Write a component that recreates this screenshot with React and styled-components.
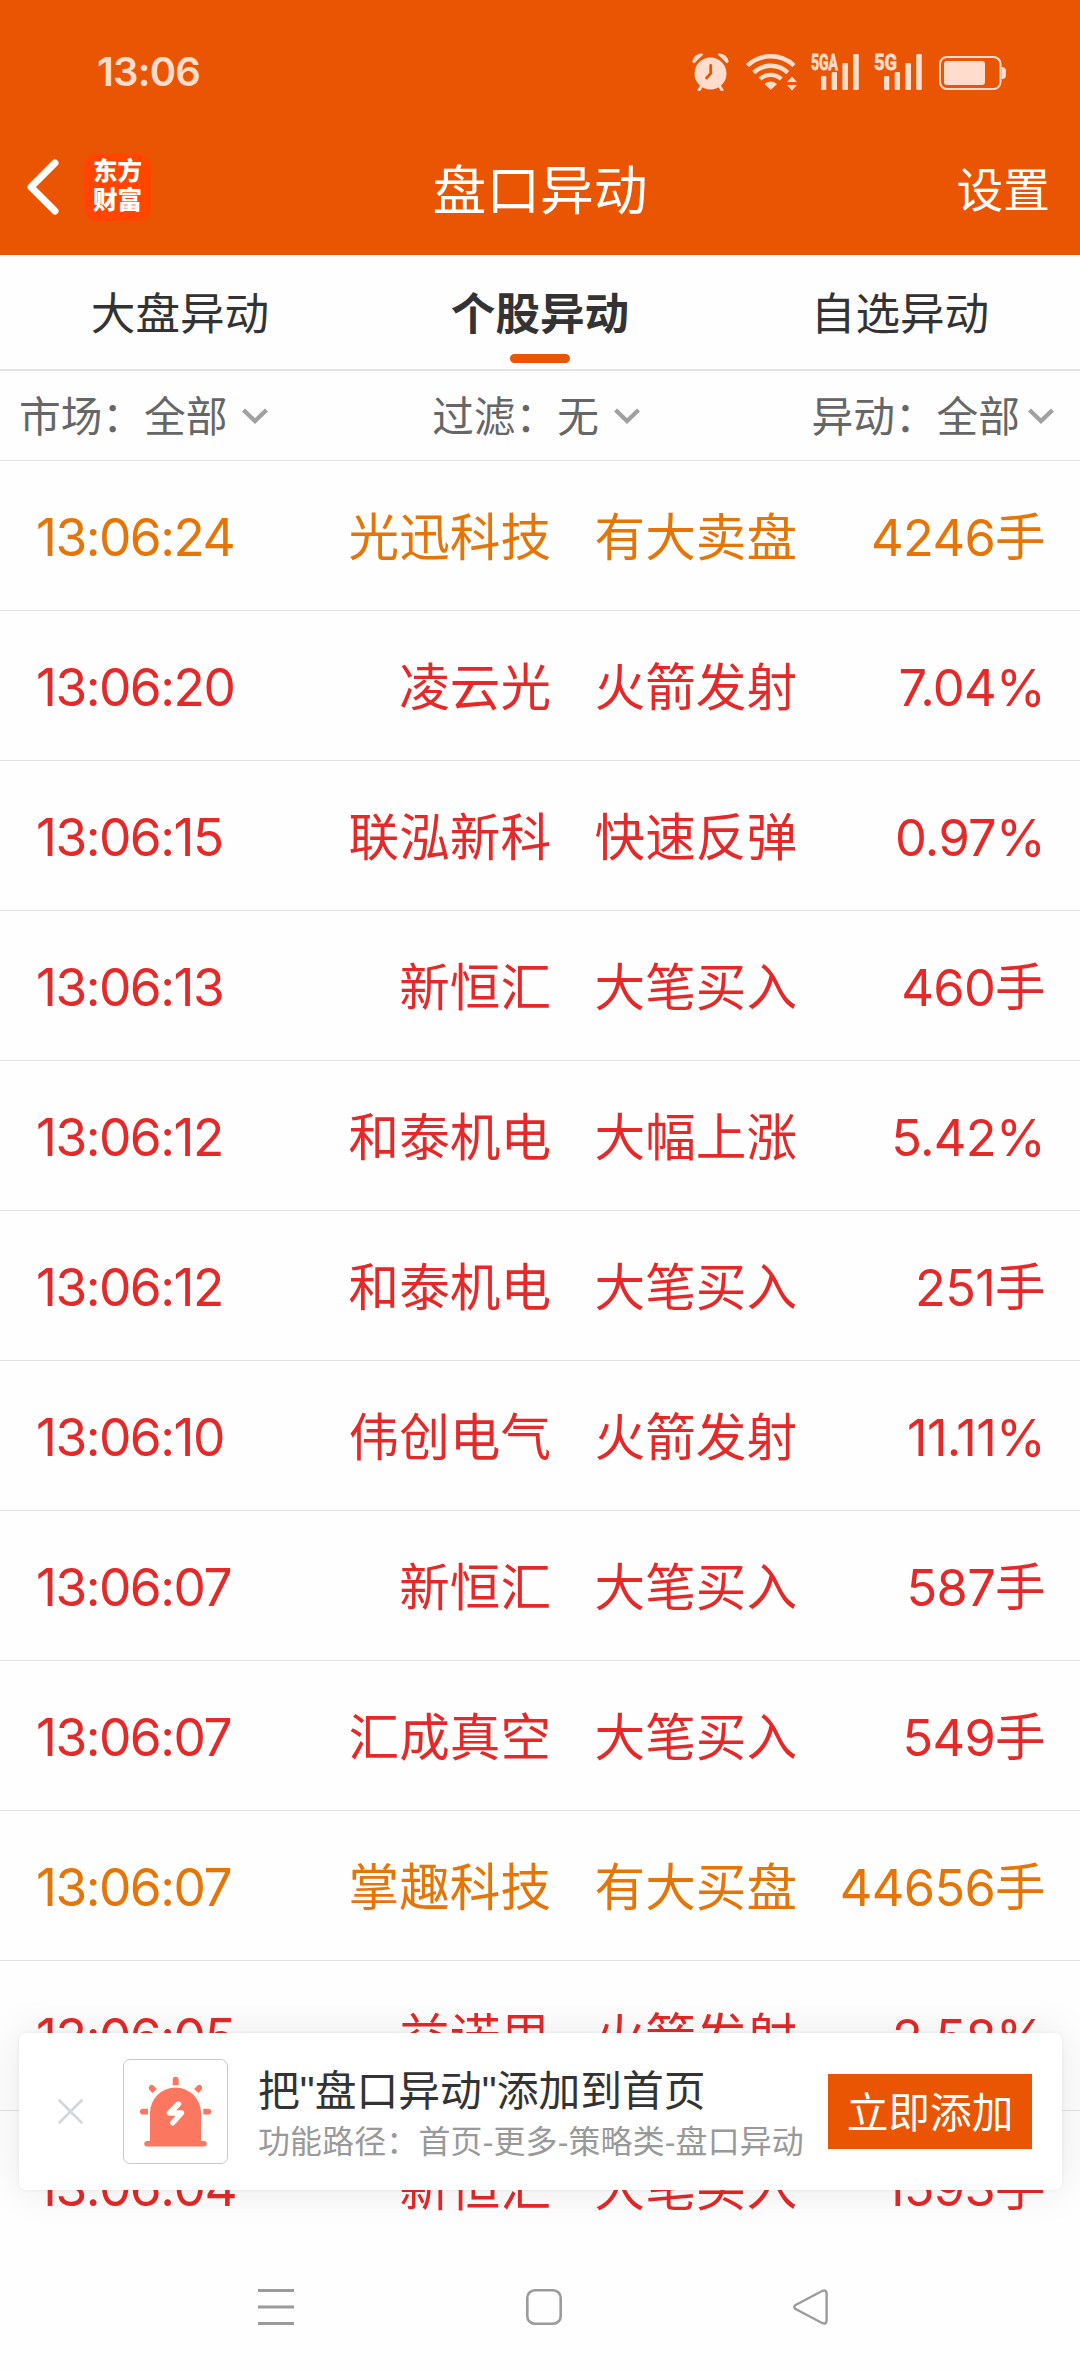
import React from 'react';
import styled, { createGlobalStyle } from 'styled-components';

const GlobalStyle = createGlobalStyle`
    * {
        box-sizing: border-box;
    }
    body {
        margin: 0;
        background-color: #ffffff;
        font-family: Inter, "Noto Sans CJK SC", sans-serif;
    }
`;

const Page = styled.div`
    display: flex;
    flex-direction: column;
    width: 1080px;
    height: 2373px;
    overflow: hidden;
    background-color: #fefefe;
`;

const Header = styled.header`
    height: 255px;
    background-color: #ea5504;
    color: #ffffff;
`;

const StatusBar = styled.div`
    display: flex;
    align-items: center;
    justify-content: space-between;
    height: 125px;
    padding: 18px 73px 0 97px;
    color: #ffdccb;
`;

const Clock = styled.span`
    font-size: 40px;
    font-weight: 600;
    letter-spacing: -0.8px;
`;

const StatusIcons = styled.div`
    display: flex;
    align-items: center;
    svg {
        display: block;
    }
`;

const TitleBar = styled.div`
    display: grid;
    grid-template-columns: 1fr auto 1fr;
    align-items: center;
    height: 124px;
    padding: 0 30px 0 26px;
`;

const TitleLeft = styled.div`
    display: flex;
    align-items: center;
    gap: 24px;
`;

const Logo = styled.div`
    width: 67px;
    height: 67px;
    padding-top: 3px;
    border-radius: 14px;
    background-color: #ff4500;
    font-size: 24.5px;
    font-weight: 900;
    line-height: 29px;
    text-align: center;
`;

const Title = styled.h1`
    margin: 0;
    padding: 7px 0 0 4px;
    font-size: 53.8px;
    font-weight: 400;
    line-height: 60px;
`;

const Settings = styled.span`
    justify-self: end;
    padding-top: 5px;
    font-size: 46.7px;
    line-height: 60px;
`;

const Tabs = styled.nav`
    display: grid;
    grid-template-columns: repeat(3, 1fr);
    height: 116px;
    border-bottom: 2px solid #e4e4e4;
`;

const Tab = styled.div`
    position: relative;
    display: flex;
    align-items: center;
    justify-content: center;
    padding-bottom: 3px;
    color: #333333;
    font-size: 44.6px;
    font-weight: ${props => (props.$active ? 700 : 400)};

    &::after {
        content: '';
        display: ${props => (props.$active ? 'block' : 'none')};
        position: absolute;
        bottom: 6px;
        width: 60px;
        height: 9px;
        border-radius: 5px;
        background-color: #ea5504;
    }
`;

const Filters = styled.div`
    display: flex;
    align-items: center;
    justify-content: space-between;
    height: 90px;
    padding: 0 26px 0 19px;
    border-bottom: 1px solid #e2e2e2;
`;

const Filter = styled.div`
    display: flex;
    align-items: center;
    gap: ${props => props.$gap || 15}px;
    margin-right: ${props => props.$shift || 0}px;
    color: #666666;
    font-size: 41.7px;
`;

const FilterLabel = styled.span`
    padding-bottom: 4px;
`;

const List = styled.div`
    flex: 1;
    min-height: 0;
    overflow: hidden;
`;

const Row = styled.div`
    display: grid;
    grid-template-columns: 300px 215px 246px 1fr;
    align-items: center;
    height: 150px;
    padding: 4px 36px 0;
    border-bottom: 1px solid #e2e2e2;
    color: ${props => (props.$amber ? '#e67508' : '#e52828')};
    font-size: 50.6px;
    line-height: 70px;
    white-space: nowrap;
`;

const Time = styled.span`
    padding-bottom: 2px;
    font-size: 51.4px;
    letter-spacing: -1.5px;
`;

const Name = styled.span`
    text-align: right;
`;

const Kind = styled.span`
    text-align: right;
`;

const Value = styled.span`
    margin-right: -1px;
    letter-spacing: -0.7px;
    text-align: right;
`;

const Popup = styled.aside`
    position: absolute;
    top: 2033px;
    left: 19px;
    display: flex;
    align-items: center;
    width: 1043px;
    height: 157px;
    padding: 0 30px 0 39px;
    border-radius: 7px;
    background-color: #ffffff;
    box-shadow: 0 0 42px rgba(0, 0, 0, 0.09), 0 0 4px rgba(0, 0, 0, 0.06);
    font-family: "Liberation Sans", "Noto Sans CJK SC", sans-serif;
`;

const AppIcon = styled.div`
    width: 105px;
    height: 105px;
    margin: 0 30px 0 40px;
    border: 1px solid #c9c9c9;
    border-radius: 7px;
    svg {
        display: block;
        margin: -1px;
    }
`;

const PopupText = styled.div`
    flex: 1;
    padding-top: 7px;
    white-space: nowrap;
`;

const PopupTitle = styled.div`
    color: #333333;
    font-size: 41.8px;
    line-height: 54px;
`;

const PopupPath = styled.div`
    color: #999999;
    font-size: 31.9px;
    letter-spacing: 0.2px;
    line-height: 46px;
`;

const AddButton = styled.button`
    width: 204px;
    height: 75px;
    padding: 4px 0 0;
    border: none;
    background-color: #ea5504;
    color: #ffffff;
    font-family: inherit;
    font-size: 41.7px;
    line-height: 71px;
`;

const NavBar = styled.footer`
    display: flex;
    justify-content: space-between;
    height: 133px;
    padding: 49px 252px 0 258px;
    svg {
        display: block;
    }
`;

const rows = [
    { time: '13:06:24', name: '光迅科技', kind: '有大卖盘', value: '4246手', amber: true },
    { time: '13:06:20', name: '凌云光', kind: '火箭发射', value: '7.04%' },
    { time: '13:06:15', name: '联泓新科', kind: '快速反弹', value: '0.97%' },
    { time: '13:06:13', name: '新恒汇', kind: '大笔买入', value: '460手' },
    { time: '13:06:12', name: '和泰机电', kind: '大幅上涨', value: '5.42%' },
    { time: '13:06:12', name: '和泰机电', kind: '大笔买入', value: '251手' },
    { time: '13:06:10', name: '伟创电气', kind: '火箭发射', value: '11.11%' },
    { time: '13:06:07', name: '新恒汇', kind: '大笔买入', value: '587手' },
    { time: '13:06:07', name: '汇成真空', kind: '大笔买入', value: '549手' },
    { time: '13:06:07', name: '掌趣科技', kind: '有大买盘', value: '44656手', amber: true },
    { time: '13:06:05', name: '益诺思', kind: '火箭发射', value: '2.58%' },
    { time: '13:06:04', name: '新恒汇', kind: '大笔买入', value: '1593手' },
];

const Chevron = () => (
    <svg width="26" height="16" viewBox="0 0 26 16" fill="none" stroke="#a0a0a0" strokeWidth="4.2">
        <path d="M1.5 2 L13 13 L24.5 2" />
    </svg>
);

const AlarmIcon = () => (
    <svg width="37" height="38" viewBox="0 0 37 38">
        <circle cx="18.5" cy="20.5" r="16" fill="currentColor" />
        <path d="M1 8.5 Q2.5 1.5 10.5 1.2 L2 9.5 Z M36 8.5 Q34.5 1.5 26.5 1.2 L35 9.5 Z" fill="currentColor" stroke="currentColor" strokeWidth="1.4" strokeLinejoin="round" />
        <path d="M9.5 33 L7 37 M27.5 33 L30 37" stroke="currentColor" strokeWidth="3" strokeLinecap="round" />
        <path d="M18.7 12.5 V20.5 L14.5 25" fill="none" stroke="#ea5504" strokeWidth="2.8" strokeLinecap="round" />
    </svg>
);

const WifiIcon = () => (
    <svg width="52" height="38" viewBox="0 0 52 38" fill="none" stroke="currentColor" strokeWidth="4.4">
        <path d="M1.5 12.5 A34 34 0 0 1 48 12.5" />
        <path d="M7.8 19.6 A24.5 24.5 0 0 1 41.7 19.6" />
        <path d="M14.2 26 A15.5 15.5 0 0 1 35.3 26" />
        <path d="M18.5 31 A9 9 0 0 1 31 31 L24.7 37 Z" fill="currentColor" stroke="none" />
        <path d="M41 29 L46 23.5 L51 29 Z M41 32 L46 37.5 L51 32 Z" fill="currentColor" stroke="none" />
    </svg>
);

const Signal = ({ label, labelWidth }) => (
    <svg width="48" height="58" viewBox="0 -10 48 58" fill="currentColor">
        <text x="0" y="16.5" fontFamily="Roboto" fontWeight="700" fontSize="22" stroke="currentColor" strokeWidth="0.8" textLength={labelWidth} lengthAdjust="spacingAndGlyphs">
            {label}
        </text>
        <rect x="10" y="23" width="5.3" height="14" rx="1" />
        <rect x="20.7" y="19" width="5.3" height="18" rx="1" />
        <rect x="31.4" y="10" width="5.6" height="27" rx="1" />
        <rect x="42.2" y="1" width="5.6" height="36" rx="1" />
    </svg>
);

const BatteryIcon = () => (
    <svg width="68" height="38" viewBox="0 0 68 38">
        <rect x="1" y="4" width="60.5" height="32" rx="7" fill="none" stroke="currentColor" strokeWidth="2" />
        <rect x="5" y="8" width="41" height="24" rx="3" fill="currentColor" />
        <path d="M62.5 14 H64 Q67 15 67 18 V22 Q67 25 64 26 H62.5 Z" fill="currentColor" />
    </svg>
);

const BackIcon = () => (
    <svg width="34" height="56" viewBox="0 0 34 56" fill="none" stroke="#ffffff" strokeWidth="7" strokeLinecap="round" strokeLinejoin="round">
        <path d="M29 4 L5 28 L29 52" />
    </svg>
);

const CloseIcon = () => (
    <svg width="25" height="25" viewBox="0 0 25 25" stroke="#d3d6db" strokeWidth="2.6" strokeLinecap="round">
        <path d="M1.5 1.5 L23.5 23.5 M23.5 1.5 L1.5 23.5" />
    </svg>
);

const SirenIcon = () => (
    <svg width="105" height="105" viewBox="0 0 105 105" fill="#fc775f">
        <path d="M27 82 V54 A25.5 25.5 0 0 1 78 54 V82 H82 A3 3 0 0 1 82 87.5 H23 A3 3 0 0 1 23 82 Z" />
        <path d="M49.7 26.3 V20.7 A3 3 0 0 1 55.7 20.7 V26.3 Z" />
        <path d="M25 49.7 H19.2 A2.9 2.9 0 0 0 19.2 55.4 H25 Z M80.3 49.7 H86 A2.9 2.9 0 0 1 86 55.4 H80.3 Z" />
        <path d="M29.5 34 L26.2 30.5 Q25 28.8 26.4 27 Q28.3 25 30.5 26.5 L34 30 Z M75.5 34 L78.8 30.5 Q80 28.8 78.6 27 Q76.7 25 74.5 26.5 L71 30 Z" />
        <path d="M55.5 45 L46.5 54 H58.5 L49.8 63.8" fill="none" stroke="#ffffff" strokeWidth="5.4" strokeLinecap="round" strokeLinejoin="round" />
    </svg>
);

const App = () => (
    <Page>
        <GlobalStyle />
        <Header>
            <StatusBar>
                <Clock>13:06</Clock>
                <StatusIcons>
                    <AlarmIcon />
                    <svg width="17" height="1" />
                    <WifiIcon />
                    <svg width="13" height="1" />
                    <Signal label="5GA" labelWidth={27} />
                    <svg width="15" height="1" />
                    <Signal label="5G" labelWidth={23} />
                    <svg width="17" height="1" />
                    <BatteryIcon />
                </StatusIcons>
            </StatusBar>
            <TitleBar>
                <TitleLeft>
                    <BackIcon />
                    <Logo>
                        <div>东方</div>
                        <div>财富</div>
                    </Logo>
                </TitleLeft>
                <Title>盘口异动</Title>
                <Settings>设置</Settings>
            </TitleBar>
        </Header>
        <Tabs>
            <Tab>大盘异动</Tab>
            <Tab $active>个股异动</Tab>
            <Tab>自选异动</Tab>
        </Tabs>
        <Filters>
            <Filter><FilterLabel>市场：全部</FilterLabel><Chevron /></Filter>
            <Filter $shift={8}><FilterLabel>过滤：无</FilterLabel><Chevron /></Filter>
            <Filter $gap={8}><FilterLabel>异动：全部</FilterLabel><Chevron /></Filter>
        </Filters>
        <List>
            {rows.map((row, i) => (
                <Row key={i} $amber={row.amber}>
                    <Time>{row.time}</Time>
                    <Name>{row.name}</Name>
                    <Kind>{row.kind}</Kind>
                    <Value>{row.value}</Value>
                </Row>
            ))}
        </List>
        <NavBar>
            <svg width="36" height="36" viewBox="0 0 36 36" stroke="#9b9b9b" strokeWidth="3">
                <path d="M0 1.5 H36 M0 18 H36 M0 34.5 H36" />
            </svg>
            <svg width="36" height="36" viewBox="0 0 36 36" fill="none" stroke="#9b9b9b" strokeWidth="2.6">
                <rect x="1.3" y="1.3" width="33.4" height="33.4" rx="7.5" />
            </svg>
            <svg width="35" height="36" viewBox="0 0 35 36" fill="none" stroke="#9b9b9b" strokeWidth="2.4">
                <path d="M2.6 16 L29.5 1.8 Q33.5 0.6 33.6 4.5 V31.5 Q33.5 35.4 29.5 34.2 L2.6 20 Q0 18 2.6 16 Z" />
            </svg>
        </NavBar>
        <Popup>
            <CloseIcon />
            <AppIcon>
                <SirenIcon />
            </AppIcon>
            <PopupText>
                <PopupTitle>把"盘口异动"添加到首页</PopupTitle>
                <PopupPath>功能路径：首页-更多-策略类-盘口异动</PopupPath>
            </PopupText>
            <AddButton>立即添加</AddButton>
        </Popup>
    </Page>
);

export default App;
